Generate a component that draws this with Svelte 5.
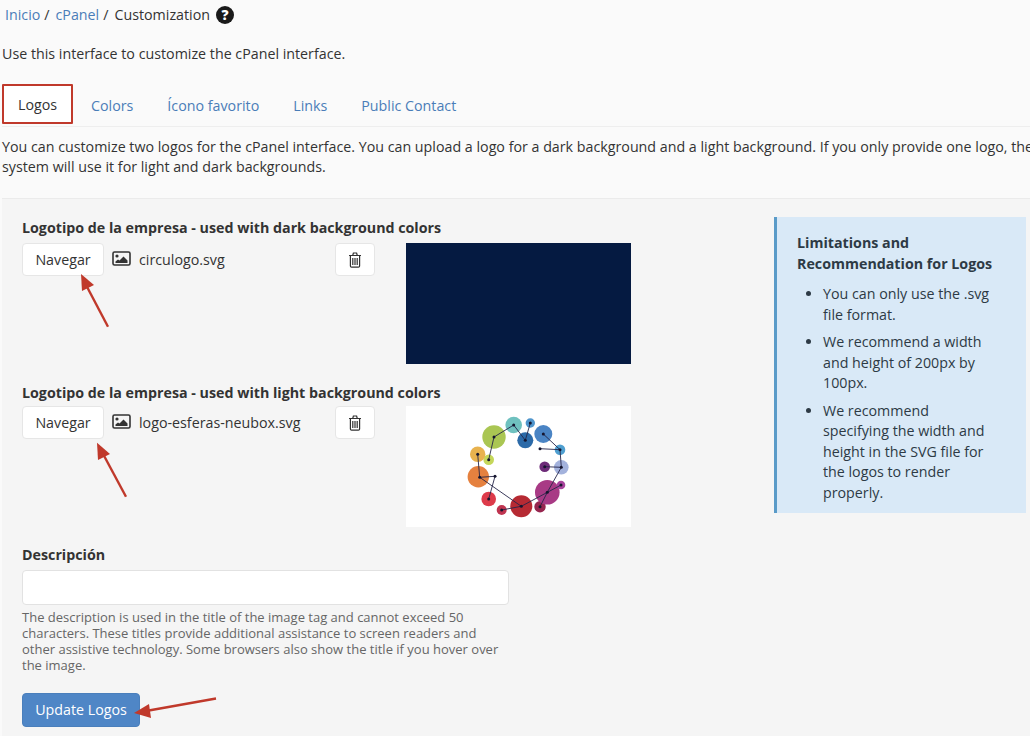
<script>
  const circles = [
    [513.7,425,8.3,'#6fc1bf'],[530.3,423,4.7,'#4f95cc'],[525.3,440.3,8,'#2c6aa8'],[543.3,434,9,'#4a84c4'],
    [494,437,11.7,'#aac653'],[488.7,459.7,5.3,'#c5d75a'],[477.7,454.3,7.7,'#e8b24e'],[478.3,476.7,10.7,'#e5813f'],
    [488.7,499,7.3,'#dd3b4a'],[501.7,510,5,'#bf3450'],[521.3,506.3,11,'#b62a33'],[540,506.7,5.7,'#97264f'],
    [547.3,492.3,12.3,'#a83a85'],[561,485,4.3,'#a8439c'],[561.3,467.3,7.3,'#a3b2dc'],[544.7,466.7,5.3,'#6d2b78'],[560,449.7,5.3,'#4f9fd0']
  ];
  const lines = [
    '540,448.7 560,449.7 543.3,434',
    '560,449.7 561.3,467.3 544.7,466.7',
    '561.3,467.3 547.3,492.3 540,506.7',
    '561,485 521.3,506.3 501.7,510',
    '521.3,506.3 479.7,477.3 477.7,454.3',
    '479.7,477.3 495,476.3 488.7,499',
    '488.7,459.7 494,437 513.7,425 525.3,440.3 530.3,423'
  ];
  const dots = [[540,448.7],[560,449.7],[543.3,434],[561.3,467.3],[544.7,466.7],[547.3,492.3],[540,506.7],[561,485],[521.3,506.3],[501.7,510],[479.7,477.3],[477.7,454.3],[495,476.3],[488.7,499],[488.7,459.7],[494,437],[513.7,425],[525.3,440.3],[530.3,423]];
  const tabs = ['Colors', 'Ícono favorito', 'Links', 'Public Contact'];
</script>

{#snippet picture()}
  <svg class="pic" viewBox="0 0 19 15" width="19" height="15" aria-hidden="true">
    <rect x="1" y="1" width="17" height="13" rx="1.5" fill="none" stroke="#333" stroke-width="1.6"/>
    <circle cx="5" cy="5" r="1.6" fill="#333"/>
    <path d="M3.5 12 L3.5 10.5 L6 8.5 L7.5 9.5 L11.5 5.5 L15.5 9.5 L15.5 12 Z" fill="#333"/>
  </svg>
{/snippet}

{#snippet trash()}
  <svg viewBox="0 0 14 16" width="14" height="16" aria-hidden="true">
    <path d="M1 3.5H13M2.4 3.5V14a1.2 1.2 0 0 0 1.2 1.2H10.4A1.2 1.2 0 0 0 11.6 14V3.5M4.7 3.5L5.4 1H8.6L9.3 3.5" fill="none" stroke="#333" stroke-width="1.2"/>
    <path d="M4.8 6V13M7 6V13M9.2 6V13" stroke="#333" stroke-width="1.2"/>
  </svg>
{/snippet}

<div class="page">
  <nav class="crumbs">
    <a href="#a">Inicio</a><span class="sep">/</span>
    <a href="#a">cPanel</a><span class="sep">/</span>
    <span>Customization</span>
    <span class="help">?</span>
  </nav>

  <p class="lead">Use this interface to customize the cPanel interface.</p>

  <div class="tabs">
    <span class="tab active">Logos</span>
    {#each tabs as t}<a class="tab" href="#a">{t}</a>{/each}
  </div>

  <p class="intro">You can customize two logos for the cPanel interface. You can upload a logo for a dark background and a light background. If you only provide one logo, the system will use it for light and dark backgrounds.</p>

  <section class="panel">
    <div class="form">
      <h4>Logotipo de la empresa - used with dark background colors</h4>
      <div class="row">
        <button class="btn browse">Navegar</button>
        <div class="file">{@render picture()}<span>circulogo.svg</span></div>
        <button class="btn bin" aria-label="Delete">{@render trash()}</button>
        <div class="preview dark"></div>
      </div>

      <h4 class="second">Logotipo de la empresa - used with light background colors</h4>
      <div class="row tight">
        <button class="btn browse">Navegar</button>
        <div class="file">{@render picture()}<span>logo-esferas-neubox.svg</span></div>
        <button class="btn bin" aria-label="Delete">{@render trash()}</button>
        <div class="preview light">
          <svg viewBox="406 406 225 121" width="225" height="121" aria-hidden="true">
            {#each circles as c}<circle cx={c[0]} cy={c[1]} r={c[2]} fill={c[3]}/>{/each}
            {#each lines as l}<polyline points={l} fill="none" stroke="#26264a" stroke-width="0.9"/>{/each}
            {#each dots as d}<circle cx={d[0]} cy={d[1]} r="1.5" fill="#15152e"/>{/each}
          </svg>
        </div>
      </div>

      <h4 class="third">Descripción</h4>
      <input class="text" type="text" aria-label="Descripción" />
      <p class="hint">The description is used in the title of the image tag and cannot exceed 50 characters. These titles provide additional assistance to screen readers and other assistive technology. Some browsers also show the title if you hover over the image.</p>
      <button class="primary">Update Logos</button>
    </div>

    <aside class="note">
      <strong>Limitations and Recommendation for Logos</strong>
      <ul>
        <li>You can only use the .svg file format.</li>
        <li>We recommend a width and height of 200px by 100px.</li>
        <li>We recommend specifying the width and height in the SVG file for the logos to render properly.</li>
      </ul>
    </aside>
  </section>

  <svg class="marks" viewBox="0 0 1030 736" width="1030" height="736" aria-hidden="true">
    <g stroke="#c0392b" stroke-width="2.4" fill="#c0392b">
      <line x1="108" y1="326.7" x2="85" y2="283"/>
      <path d="M81 274 L94 285 L82 291 Z" stroke="none"/>
      <line x1="126" y1="496.7" x2="102" y2="452"/>
      <path d="M97 442.7 L110 454 L98 460 Z" stroke="none"/>
      <line x1="216" y1="698.5" x2="146" y2="711"/>
      <path d="M134 713 L149 704 L151 718 Z" stroke="none"/>
    </g>
  </svg>
</div>

<style>
  :global(body) { margin: 0; background: #fafafa; }
  .page {
    position: relative;
    width: 1030px;
    height: 736px;
    overflow: hidden;
    box-sizing: border-box;
    padding-top: 5px;
    background: #fafafa;
    color: #333;
    font: 14.25px/20px "Open Sans", sans-serif;
  }
  a { color: #4a7db8; text-decoration: none; }
  .crumbs { display: flex; align-items: center; height: 20px; padding-left: 5px; }
  .sep { margin: 0 6px 0 4px; }
  .help {
    display: flex; align-items: center; justify-content: center;
    width: 18px; height: 18px; margin-left: 6px;
    border-radius: 50%; background: #1a1a1a; color: #fff;
    font: 800 14px/18px "Open Sans", sans-serif;
  }
  .lead { margin: 19px 0 0 2px; }
  .tabs {
    display: flex; align-items: stretch; height: 42px; margin: 20px 0 0 2px;
    border-bottom: 1px solid #eee; box-sizing: content-box;
  }
  .tab { display: flex; align-items: center; padding: 2px 17px 0; }
  .tab.active {
    box-sizing: border-box; width: 71px; padding: 2px 14px 0;
    background: #fff; border: 2px solid #c0392b; border-radius: 1px;
    height: 40px;
  }
  .tab:nth-child(2) { padding-left: 18px; }
  .intro { margin: 10px 0 0 2px; width: 1045px; line-height: 20px; }
  .panel {
    display: grid; grid-template-columns: 752px 252px;
    margin: 21px 0 0 2px; padding: 19px 0 20px 20px; height: 560px;
    background: #f5f5f5; border-top: 1px solid #ebebeb;
    box-sizing: border-box;
  }
  .form { min-width: 0; }
  h4 { margin: 0; font-size: 14.25px; line-height: 20px; font-weight: 700; color: #333; }
  .second { margin-top: 19px; }
  .third { margin-top: 18px; }
  .row { display: flex; align-items: flex-start; margin-top: 5px; }
  .row.tight { margin-top: 3px; }
  .btn {
    box-sizing: border-box; height: 33px; background: #fff; color: #333;
    border: 1px solid #e6e6e6; border-radius: 4px; font: inherit; padding: 0;
    display: flex; align-items: center; justify-content: center;
  }
  .browse { width: 82px; flex: none; padding-top: 1px; }
  .file { display: flex; align-items: center; gap: 8px; width: 231px; height: 33px; padding: 1px 0 0 8px; flex: none; box-sizing: border-box; }
  .pic { margin-top: -3px; }
  .bin { width: 40px; flex: none; }
  .preview { width: 225px; height: 121px; margin-left: 31px; flex: none; }
  .preview svg { display: block; }
  .dark { background: #051a41; }
  .light { background: #fff; }
  .text {
    display: block; box-sizing: border-box; width: 487px; height: 35px; margin-top: 5px;
    background: #fff; border: 1px solid #e2e2e2; border-radius: 4px;
  }
  .hint { margin: 4px 0 0; width: 487px; font-size: 13px; line-height: 16px; color: #666; }
  .primary {
    display: block; box-sizing: border-box; width: 118px; height: 34px; margin-top: 20px;
    background: #4f86c6; color: #fff; border: 1px solid #4a7fbc; border-radius: 4px;
    font: inherit; padding: 0;
  }
  .note {
    box-sizing: border-box; width: 252px; height: 296px; margin-top: -1px;
    padding: 16px 30px 0 20px;
    background: #d9e9f7; border-left: 3px solid #5a9bc8; color: #2d3a45; line-height: 20.5px;
  }
  .note strong { display: block; }
  ul { margin: 10px 0 0; padding: 0 0 0 26px; }
  li { margin-bottom: 7px; }
  .marks { position: absolute; left: 0; top: 0; pointer-events: none; }
</style>
